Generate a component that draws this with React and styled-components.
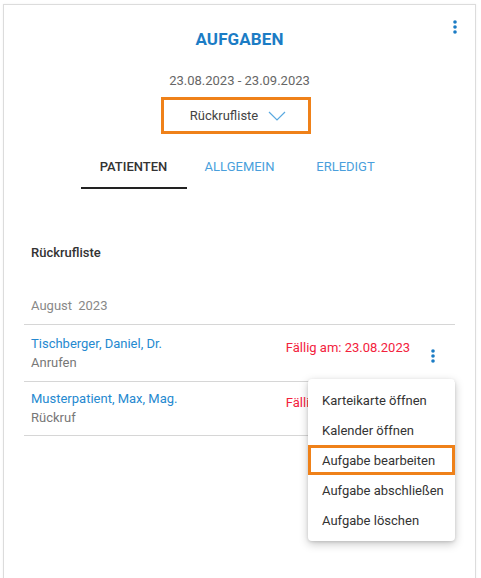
import React, { useState } from 'react';
import styled, { createGlobalStyle } from 'styled-components';

const GlobalStyle = createGlobalStyle`
  html, body {
    margin: 0;
    padding: 0;
    background: #ffffff;
    overflow: hidden;
  }
  body {
    font-family: Roboto, "Liberation Sans", Arial, sans-serif;
    -webkit-font-smoothing: antialiased;
  }
  * { box-sizing: border-box; }
`;

const Page = styled.div`
  padding: 4px 5px 0 3px;
`;

const Card = styled.div`
  position: relative;
  min-height: 600px;
  border: 1px solid #dcdcdc;
  background: #fff;
  box-shadow: 0 0 2px rgba(0, 0, 0, 0.06);
  display: flex;
  flex-direction: column;
  align-items: center;
`;

const MoreButton = styled.button`
  position: absolute;
  top: 15px;
  right: 18px;
  border: none;
  background: none;
  padding: 0;
  display: flex;
  cursor: pointer;
`;

const Title = styled.h2`
  margin: 24px 0 0;
  font-size: 17px;
  line-height: 20px;
  font-weight: 700;
  color: #1b7cc5;
  letter-spacing: 0.1px;
`;

const DateRange = styled.div`
  margin-top: 24px;
  font-size: 13px;
  line-height: 16px;
  color: #666;
`;

const Select = styled.button`
  margin: 8px 7px 0 0;
  width: 150px;
  height: 37px;
  border: 3px solid #ef8119;
  background: #fff;
  display: flex;
  align-items: center;
  justify-content: center;
  gap: 10px;
  font-family: inherit;
  font-size: 13px;
  color: #444;
  padding: 0 0 0 4px;
  cursor: pointer;
`;

const Tabs = styled.div`
  margin-top: 11px;
  display: flex;
`;

const Tab = styled.button`
  width: 106px;
  height: 44px;
  border: none;
  background: none;
  border-bottom: 2px solid ${p => (p.$active ? '#222' : 'transparent')};
  font-family: inherit;
  font-size: 13px;
  font-weight: ${p => (p.$active ? 500 : 400)};
  color: ${p => (p.$active ? '#333' : '#4a9fdc')};
  padding: 0;
  cursor: pointer;
`;

const Section = styled.div`
  position: relative;
  align-self: stretch;
  margin: 0 20px;
`;

const ListTitle = styled.div`
  margin-top: 56px;
  padding-left: 7px;
  font-size: 13px;
  line-height: 16px;
  font-weight: 500;
  color: #333;
`;

const Month = styled.div`
  margin-top: 37px;
  padding: 0 7px 10px;
  font-size: 13px;
  line-height: 16px;
  color: #888;
  word-spacing: 3px;
  border-bottom: 1px solid #d6d6d6;
`;

const Row = styled.div`
  display: flex;
  align-items: flex-start;
  padding: ${p => (p.$first ? '11px 20px 10px 7px' : '9px 20px 9px 7px')};
  border-bottom: 1px solid #d6d6d6;
`;

const RowMain = styled.div`
  flex: 1;
  display: flex;
  flex-direction: column;
  gap: 3px;
`;

const Name = styled.span`
  font-size: 13px;
  line-height: 16px;
  color: #2589d0;
`;

const Kind = styled.span`
  font-size: 13px;
  line-height: 16px;
  color: #777;
`;

const Due = styled.span`
  margin-top: 4px;
  font-size: 13px;
  line-height: 16px;
  color: #f3213c;
`;

const RowMenu = styled.button`
  margin: 13px 0 0 21px;
  border: none;
  background: none;
  padding: 0;
  display: flex;
  cursor: pointer;
`;

const Menu = styled.ul`
  position: absolute;
  top: 190px;
  right: 0;
  width: 147px;
  margin: 0;
  padding: 6px 0;
  list-style: none;
  background: #fff;
  border-radius: 4px;
  box-shadow: 0 3px 10px rgba(0, 0, 0, 0.22), 0 1px 3px rgba(0, 0, 0, 0.12);
`;

const MenuItem = styled.li`
  height: 30px;
  display: flex;
  align-items: center;
  padding-left: ${p => (p.$highlight ? '11px' : '14px')};
  font-size: 13px;
  color: #333;
  border: ${p => (p.$highlight ? '3px solid #ef8119' : 'none')};
  cursor: pointer;
`;

const Kebab = ({ color = '#1b7cc5' }) => (
  <svg width="4" height="14" viewBox="0 0 4 14">
    <circle cx="2" cy="2" r="1.8" fill={color} />
    <circle cx="2" cy="7" r="1.8" fill={color} />
    <circle cx="2" cy="12" r="1.8" fill={color} />
  </svg>
);

const Chevron = () => (
  <svg width="18" height="10" viewBox="0 0 18 10">
    <path d="M1 1 L9 9 L17 1" fill="none" stroke="#5aa9e0" strokeWidth="1.2" />
  </svg>
);

const tasks = [
  { name: 'Tischberger, Daniel, Dr.', kind: 'Anrufen', due: 'Fällig am: 23.08.2023' },
  { name: 'Musterpatient, Max, Mag.', kind: 'Rückruf', due: 'Fällig am: 23.08.2023' },
];

const menuItems = [
  'Karteikarte öffnen',
  'Kalender öffnen',
  'Aufgabe bearbeiten',
  'Aufgabe abschließen',
  'Aufgabe löschen',
];

export default function App() {
  const [tab, setTab] = useState('PATIENTEN');

  return (
    <Page>
      <GlobalStyle />
      <Card>
        <MoreButton aria-label="Mehr">
          <Kebab />
        </MoreButton>
        <Title>AUFGABEN</Title>
        <DateRange>23.08.2023 - 23.09.2023</DateRange>
        <Select>
          Rückrufliste
          <Chevron />
        </Select>
        <Tabs>
          {['PATIENTEN', 'ALLGEMEIN', 'ERLEDIGT'].map(t => (
            <Tab key={t} $active={tab === t} onClick={() => setTab(t)}>
              {t}
            </Tab>
          ))}
        </Tabs>
        <Section>
          <ListTitle>Rückrufliste</ListTitle>
          <Month>August 2023</Month>
          {tasks.map((t, i) => (
            <Row key={t.name} $first={i === 0}>
              <RowMain>
                <Name>{t.name}</Name>
                <Kind>{t.kind}</Kind>
              </RowMain>
              <Due>{t.due}</Due>
              <RowMenu aria-label="Aktionen">
                <Kebab />
              </RowMenu>
            </Row>
          ))}
          <Menu>
            {menuItems.map(m => (
              <MenuItem key={m} $highlight={m === 'Aufgabe bearbeiten'}>
                {m}
              </MenuItem>
            ))}
          </Menu>
        </Section>
      </Card>
    </Page>
  );
}
